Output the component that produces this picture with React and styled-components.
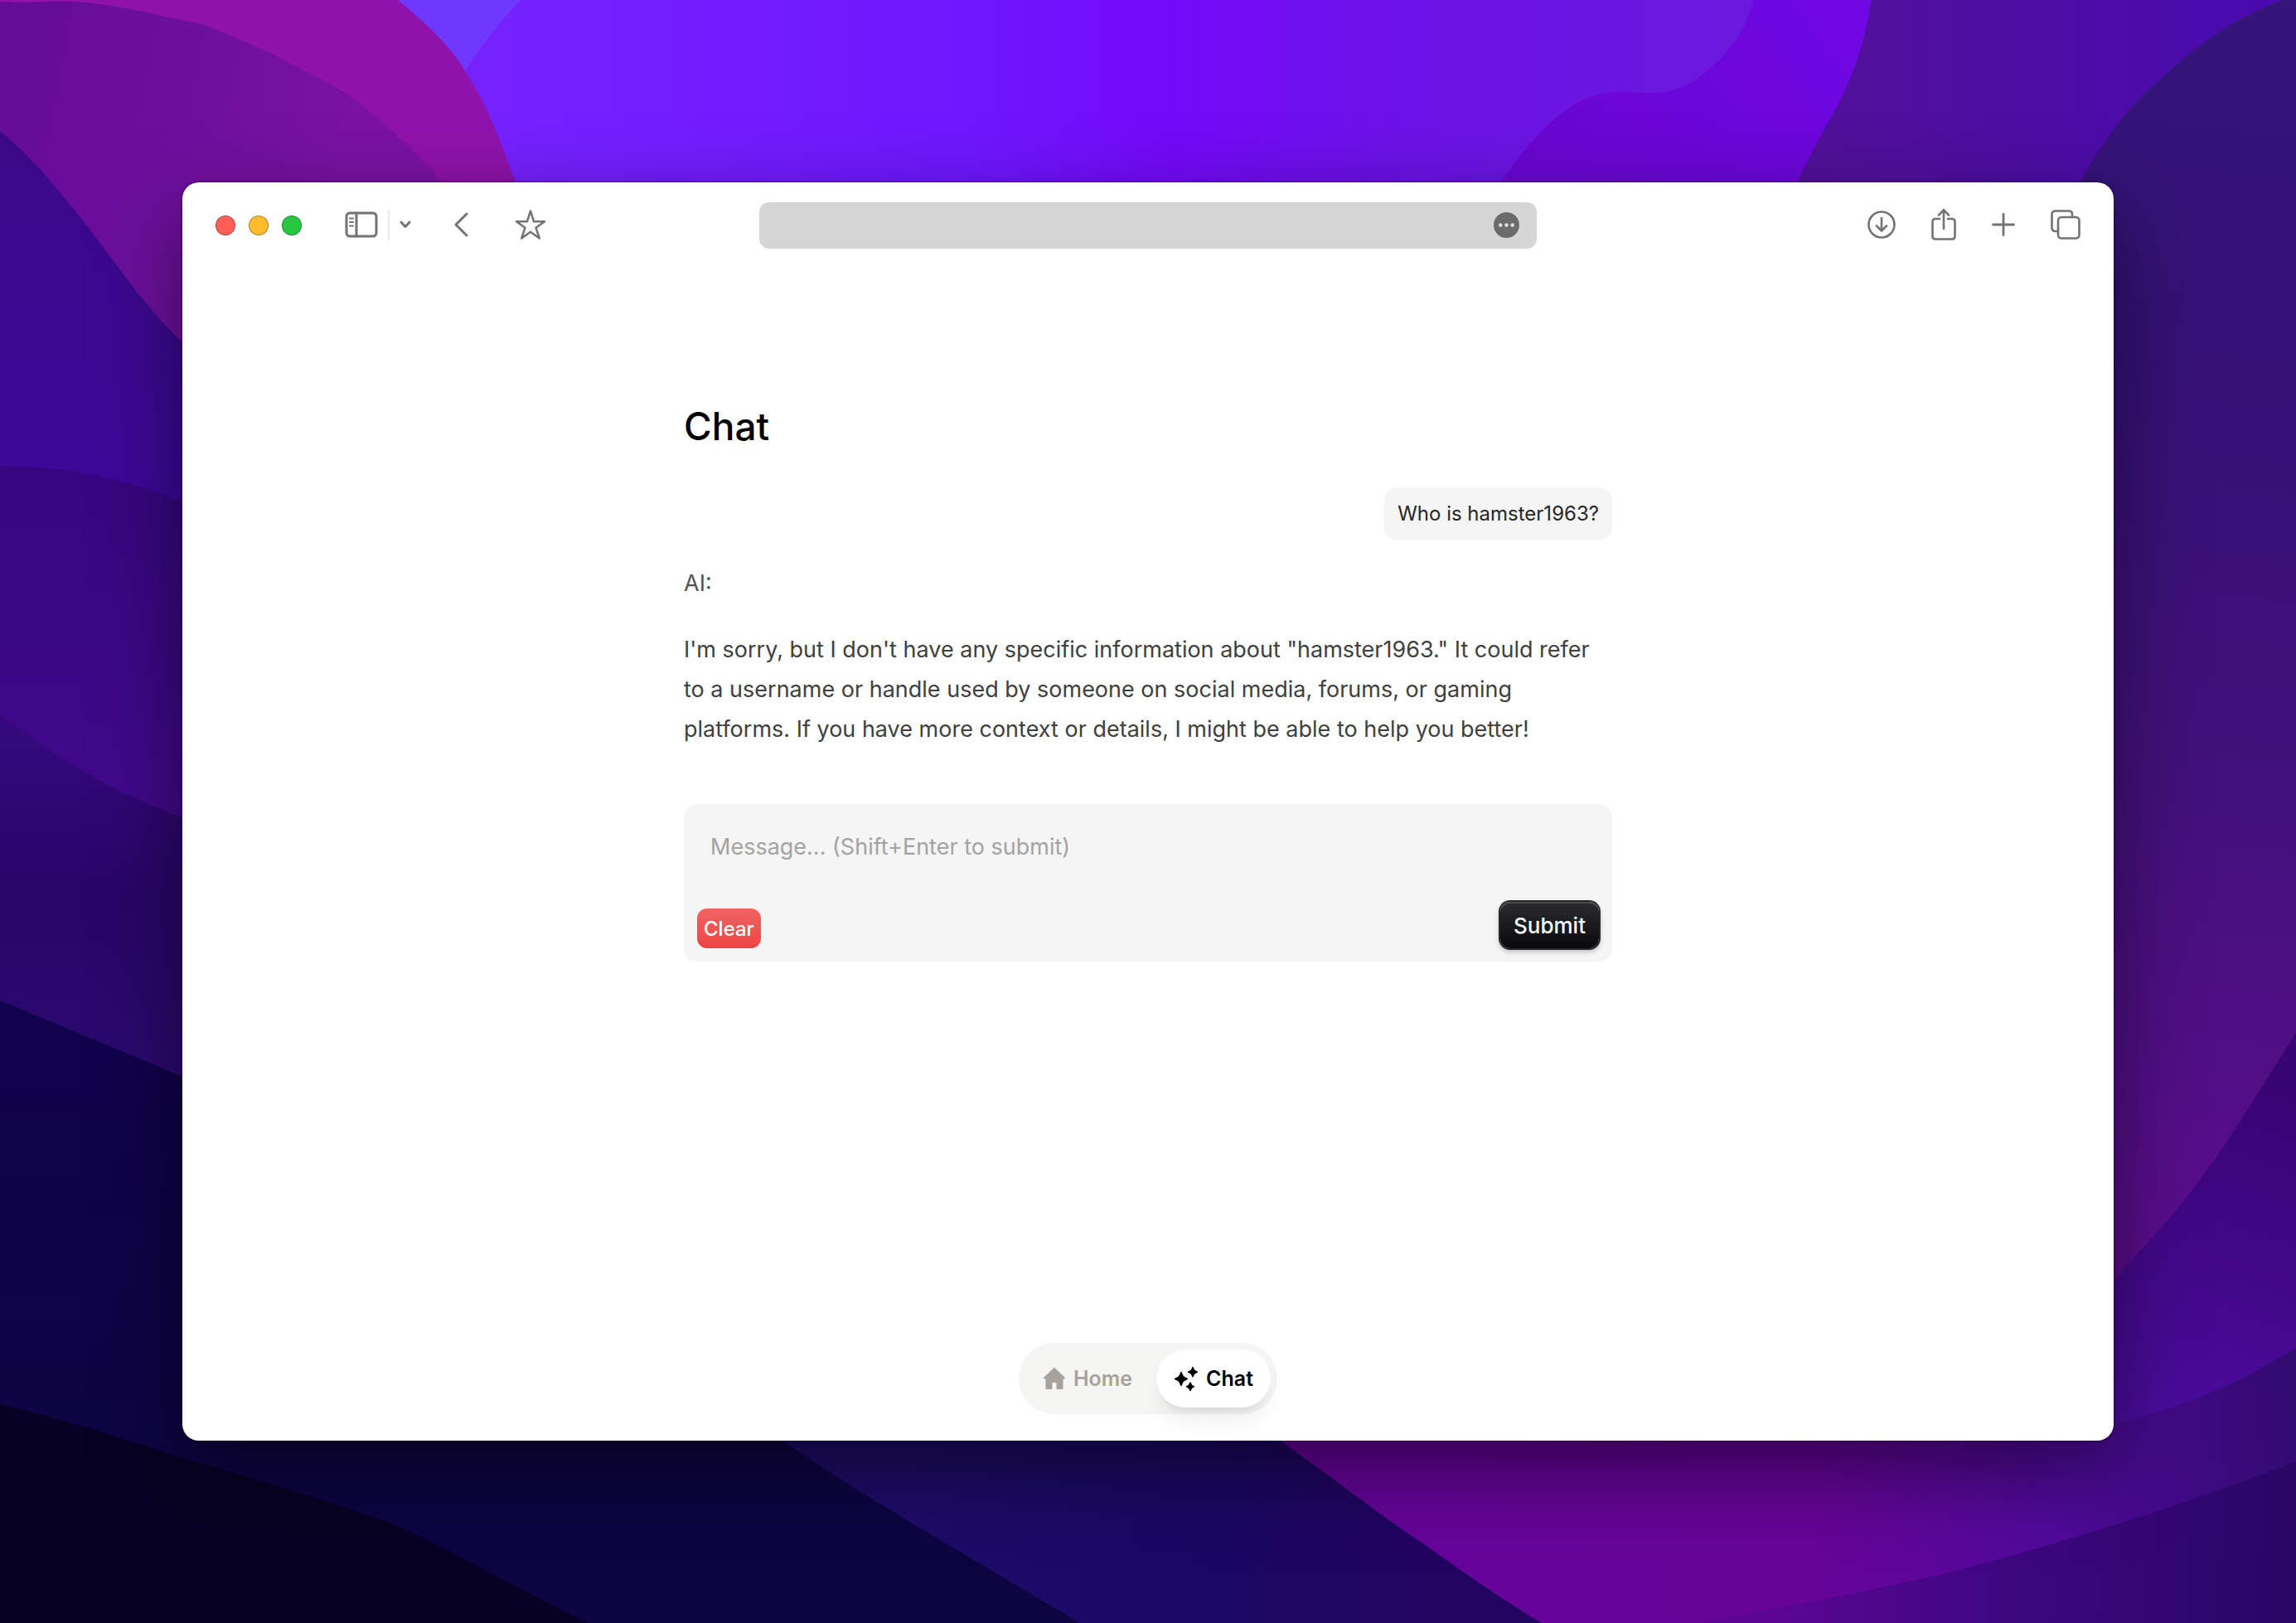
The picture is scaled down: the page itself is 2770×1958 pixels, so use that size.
import React, { useState } from "react";
import styled, { createGlobalStyle, css } from "styled-components";

const GlobalStyle = createGlobalStyle`
  *, *::before, *::after { box-sizing: border-box; }
  body {
    margin: 0;
    background: #12034c;
    font-family: Inter, "Liberation Sans", sans-serif;
    -webkit-font-smoothing: antialiased;
  }
  button, textarea { font-family: inherit; }
  h1, p { margin: 0; }
`;

const Desktop = styled.div`
  position: relative;
  isolation: isolate;
  display: flex;
  min-height: 100vh;
  padding: 220px;
  overflow: hidden;
`;

const WallpaperSvg = styled.svg`
  position: absolute;
  inset: 0;
  z-index: -1;
  width: 100%;
  height: 100%;
`;

const BrowserWindow = styled.div`
  flex: 1;
  min-width: 0;
  display: flex;
  flex-direction: column;
  background: #fff;
  border-radius: 20px;
  box-shadow: 0 0 3px rgba(0, 0, 0, 0.6), 0 36px 100px rgba(0, 0, 0, 0.5);
`;

const Toolbar = styled.header`
  display: grid;
  grid-template-columns: 1fr minmax(0, 938px) 1fr;
  align-items: center;
  height: 104px;
  padding: 0 40px;
  color: #737373;
`;

const ToolbarGroup = styled.div`
  display: flex;
  align-items: center;
  gap: ${(p) => p.$gap}px;
  justify-content: ${(p) => (p.$end ? "flex-end" : "flex-start")};
`;

const Light = styled.button`
  width: 24px;
  height: 24px;
  padding: 0;
  border: 1px solid rgba(0, 0, 0, 0.3);
  border-radius: 50%;
  background: ${(p) => p.$color};
`;

const IconButton = styled.button`
  display: flex;
  padding: 0 0 2px;
  border: 0;
  background: none;
  color: inherit;
  svg {
    display: block;
    fill: none;
    stroke: currentColor;
    stroke-width: 3;
    stroke-linecap: round;
    stroke-linejoin: round;
  }
`;

const Divider = styled.span`
  width: 2px;
  height: 36px;
  background: #ececec;
`;

const AddressBar = styled.div`
  display: flex;
  align-items: center;
  justify-content: flex-end;
  height: 56px;
  padding: 0 21px;
  border-radius: 12px;
  background: #d6d6d6;
`;

const Main = styled.main`
  flex: 1;
  display: flex;
  flex-direction: column;
  width: 100%;
  max-width: 1120px;
  margin: 0 auto;
  padding: 160px 0 32px;
`;

const Title = styled.h1`
  font-size: 46px;
  line-height: 60px;
  font-weight: 500;
  color: #000;
`;

const UserMessage = styled.p`
  align-self: flex-end;
  margin-top: 44px;
  padding: 16px;
  border-radius: 16px;
  background: #f5f5f5;
  color: #262626;
  font-size: 24px;
  line-height: 32px;
`;

const Reply = styled.div`
  display: flex;
  flex-direction: column;
  gap: 32px;
  margin-top: 28px;
  color: #404040;
  font-size: 27px;
  line-height: 48px;
`;

const Author = styled.p`
  color: #525252;
`;

const Composer = styled.form`
  display: flex;
  flex-direction: column;
  margin-top: 66px;
  border-radius: 16px;
  background: #f5f5f5;
`;

const MessageBox = styled.textarea`
  display: block;
  height: 118px;
  padding: 28px 32px 0;
  border: 0;
  outline: 0;
  resize: none;
  overflow: hidden;
  background: none;
  color: #262626;
  font-size: 27px;
  line-height: 48px;
  &::placeholder {
    color: #a3a3a3;
    opacity: 1;
  }
`;

const Actions = styled.div`
  display: flex;
  align-items: flex-end;
  justify-content: space-between;
  padding: 0 16px 16px;
`;

const ActionButton = styled.button`
  border: 0;
  color: #fff;
  font-weight: 500;
  ${(p) =>
    p.$danger
      ? css`
          height: 48px;
          padding: 0 8px;
          border-radius: 12px;
          background: linear-gradient(#f16464, #ef4444);
          font-size: 24px;
        `
      : css`
          height: 56px;
          padding: 0 16px;
          border-radius: 12px;
          background: linear-gradient(#2c2c2e, #09090b);
          box-shadow: inset 0 2px 0 rgba(255, 255, 255, 0.14), 0 0 0 2px #27272a,
            0 3px 6px 1px rgba(0, 0, 0, 0.25);
          font-size: 26px;
        `}
`;

const Dock = styled.nav`
  display: flex;
  align-self: center;
  gap: 8px;
  margin-top: auto;
  padding: 8px;
  border-radius: 43px;
  background: #f5f5f4;
`;

const DockLink = styled.a`
  display: flex;
  align-items: center;
  gap: 9px;
  height: 70px;
  padding: 0 21px;
  border-radius: 35px;
  color: #a8a29e;
  font-size: 25px;
  font-weight: 600;
  text-decoration: none;
  svg {
    display: block;
    fill: currentColor;
    stroke: currentColor;
    stroke-width: 2;
    stroke-linejoin: round;
  }
  ${(p) =>
    p.$active &&
    css`
      background: #fff;
      color: #000;
      box-shadow: 0 20px 30px -6px rgba(0, 0, 0, 0.07), 0 8px 12px -6px rgba(0, 0, 0, 0.08);
    `}
`;

const Wallpaper = () => (
  <WallpaperSvg viewBox="0 0 2770 1958" preserveAspectRatio="xMidYMid slice" aria-hidden="true">
    <defs>
      <linearGradient id="sky" gradientUnits="userSpaceOnUse" x1="560" y1="0" x2="2110" y2="0">
        <stop offset="0" stopColor="#7622ff" />
        <stop offset="0.4" stopColor="#6f17ff" />
        <stop offset="0.55" stopColor="#7309f9" />
        <stop offset="0.72" stopColor="#6c12e8" />
        <stop offset="1" stopColor="#6a19dc" />
      </linearGradient>
      <linearGradient id="violet" gradientUnits="userSpaceOnUse" x1="1900" y1="220" x2="2200" y2="0">
        <stop offset="0" stopColor="#6a06d2" />
        <stop offset="1" stopColor="#6e07e2" />
      </linearGradient>
      <linearGradient id="plum" gradientUnits="userSpaceOnUse" x1="2200" y1="0" x2="2740" y2="0">
        <stop offset="0" stopColor="#511099" />
        <stop offset="1" stopColor="#480ab0" />
      </linearGradient>
      <linearGradient id="orchid" gradientUnits="userSpaceOnUse" x1="0" y1="60" x2="430" y2="130">
        <stop offset="0" stopColor="#650b99" />
        <stop offset="0.4" stopColor="#6a0f9c" />
        <stop offset="1" stopColor="#7a12a4" />
      </linearGradient>
      <linearGradient id="east" gradientUnits="userSpaceOnUse" x1="2700" y1="0" x2="2560" y2="1500">
        <stop offset="0" stopColor="#34157a" />
        <stop offset="0.3" stopColor="#351176" />
        <stop offset="0.6" stopColor="#41117a" />
        <stop offset="1" stopColor="#5a0d8c" />
      </linearGradient>
      <linearGradient id="southeast" gradientUnits="userSpaceOnUse" x1="2740" y1="1300" x2="2600" y2="1700">
        <stop offset="0" stopColor="#380372" />
        <stop offset="1" stopColor="#4a0c9c" />
      </linearGradient>
      <linearGradient id="berry" gradientUnits="userSpaceOnUse" x1="1700" y1="1800" x2="2770" y2="1700">
        <stop offset="0" stopColor="#66049a" />
        <stop offset="0.45" stopColor="#660498" />
        <stop offset="0.72" stopColor="#4f0a9a" />
        <stop offset="1" stopColor="#320a70" />
      </linearGradient>
      <linearGradient id="corner" gradientUnits="userSpaceOnUse" x1="2150" y1="1920" x2="2770" y2="1958">
        <stop offset="0" stopColor="#5a0594" />
        <stop offset="0.4" stopColor="#3f0781" />
        <stop offset="1" stopColor="#280665" />
      </linearGradient>
      <linearGradient id="navy" gradientUnits="userSpaceOnUse" x1="1100" y1="1850" x2="1750" y2="1850">
        <stop offset="0" stopColor="#1d0c68" />
        <stop offset="0.5" stopColor="#190864" />
        <stop offset="1" stopColor="#220360" />
      </linearGradient>
      <linearGradient id="deep" gradientUnits="userSpaceOnUse" x1="0" y1="1230" x2="0" y2="1900">
        <stop offset="0" stopColor="#10024c" />
        <stop offset="1" stopColor="#0c0540" />
      </linearGradient>
      <linearGradient id="west1" gradientUnits="userSpaceOnUse" x1="0" y1="200" x2="0" y2="600">
        <stop offset="0" stopColor="#3b088a" />
        <stop offset="1" stopColor="#3c0899" />
      </linearGradient>
      <linearGradient id="west2" gradientUnits="userSpaceOnUse" x1="0" y1="560" x2="0" y2="980">
        <stop offset="0" stopColor="#35067e" />
        <stop offset="1" stopColor="#41098c" />
      </linearGradient>
      <linearGradient id="west3" gradientUnits="userSpaceOnUse" x1="0" y1="870" x2="0" y2="1300">
        <stop offset="0" stopColor="#35097d" />
        <stop offset="0.5" stopColor="#280568" />
        <stop offset="1" stopColor="#2b0a70" />
      </linearGradient>
    </defs>
    <rect width="2770" height="1958" fill="url(#sky)" />
    <path d="M460 0H628Q590 40 558 90L500 90Z" fill="#7038ff" />
    <path d="M2115 0C2108 35 2085 65 2058 87C2030 112 2000 113 1979 112C1943 108 1915 113 1890 132C1850 162 1828 195 1811 220V300H2300V0Z" fill="url(#violet)" />
    <path d="M2258 0C2252 36 2245 62 2235 87C2226 110 2218 126 2208 143C2194 168 2180 194 2169 220V400H2770V0Z" fill="url(#plum)" />
    <path d="M2753 0C2690 25 2650 55 2607 95C2560 135 2535 175 2509 220V1700H2770V0Z" fill="url(#east)" />
    <path d="M2770 1246C2735 1300 2700 1360 2663 1411C2630 1458 2590 1500 2540 1556L2400 1700V1800H2770Z" fill="url(#southeast)" />
    <path d="M0 0H480C520 33 545 58 562 87C590 130 605 175 622 220V600H0Z" fill="#8f13ab" />
    <path d="M0 2C40 4 70 0 106 3C150 8 200 20 247 30C275 42 322 60 353 78C385 94 405 104 424 117C460 145 500 180 534 220V600H0Z" fill="url(#orchid)" />
    <path d="M0 158C40 190 75 235 107 275C140 318 175 370 220 413L300 480V800H0Z" fill="url(#west1)" />
    <path d="M0 562C80 562 150 578 220 606L300 640V1100H0Z" fill="url(#west2)" />
    <path d="M0 862C60 905 110 945 220 986L300 1015V1400H0Z" fill="url(#west3)" />
    <path d="M1500 1700L2550 1717C2630 1700 2700 1670 2770 1626V1958H1500Z" fill="url(#berry)" />
    <path d="M2050 1958C2200 1930 2290 1912 2367 1893C2500 1858 2650 1810 2770 1763V1958Z" fill="url(#corner)" />
    <path d="M900 1700H1490C1600 1775 1660 1825 1714 1860C1770 1900 1820 1935 1860 1958H900Z" fill="url(#navy)" />
    <path d="M0 1207C60 1232 140 1265 220 1299L890 1700C960 1750 1010 1783 1060 1813C1120 1850 1220 1908 1302 1958H0Z" fill="url(#deep)" />
    <path d="M0 1694C80 1714 150 1735 212 1757C310 1785 400 1812 477 1840C560 1878 630 1920 710 1958H0Z" fill="#070223" />
  </WallpaperSvg>
);

const SidebarIcon = () => (
  <svg width="40" height="32" viewBox="0 0 40 32">
    <rect x="2" y="2" width="36" height="28" rx="4" />
    <path d="M14 2V30" />
    <path d="M6 8.500H10M6 13H10M6 17.500H10" strokeWidth="2" />
  </svg>
);

const ChevronIcon = () => (
  <svg width="14" height="10" viewBox="0 0 14 10">
    <path d="M2 2L7 7.500L12 2" />
  </svg>
);

const BackIcon = () => (
  <svg width="17" height="30" viewBox="0 0 17 30">
    <path d="M15 2L2 15L15 28" />
  </svg>
);

const StarIcon = () => (
  <svg width="38" height="38" viewBox="0 0 38 38">
    <path
      d="M19 2.500L23 15.200H36L25.500 22.700L29.800 35.500L19 27.700L8.200 35.500L12.500 22.700L2 15.200H15Z"
      strokeWidth="2.500"
    />
  </svg>
);

const MoreIcon = () => (
  <svg width="31" height="31" viewBox="0 0 31 31">
    <circle cx="15.500" cy="15.500" r="15.500" fill="#6b6b6b" stroke="none" />
    <g fill="#e2e2e2" stroke="none">
      <circle cx="8.300" cy="15.500" r="2.200" />
      <circle cx="15.500" cy="15.500" r="2.200" />
      <circle cx="22.700" cy="15.500" r="2.200" />
    </g>
  </svg>
);

const DownloadIcon = () => (
  <svg width="34" height="34" viewBox="0 0 34 34">
    <circle cx="17" cy="17" r="15.500" strokeWidth="2.600" />
    <path d="M17 9V24M11 18.500L17 24.500L23 18.500" strokeWidth="2.600" />
  </svg>
);

const ShareIcon = () => (
  <svg width="30" height="40" viewBox="0 0 30 40">
    <path d="M10 13H5Q1.500 13 1.500 16.500V34Q1.500 37.500 5 37.500H25Q28.500 37.500 28.500 34V16.500Q28.500 13 25 13H20" strokeWidth="2.600" />
    <path d="M15 25V2.500M9 8.500L15 2.200L21 8.500" strokeWidth="2.600" />
  </svg>
);

const PlusIcon = () => (
  <svg width="28" height="28" viewBox="0 0 28 28">
    <path d="M14 1.500V26.500M1.500 14H26.500" strokeWidth="2.800" />
  </svg>
);

const TabsIcon = () => (
  <svg width="36" height="36" viewBox="0 0 36 36">
    <path d="M9 26H6Q1.500 26 1.500 22V5.500Q1.500 1.500 6 1.500H22Q26 1.500 26 5.500V9" strokeWidth="2.600" />
    <rect x="9" y="9" width="25.500" height="25.500" rx="4" strokeWidth="2.600" />
  </svg>
);

const HomeIcon = () => (
  <svg width="28" height="28" viewBox="0 0 28 28">
    <path d="M14 2L26 13.500H23.500V26H17.500V18H10.500V26H4.500V13.500H2Z" />
  </svg>
);

const SparklesIcon = () => (
  <svg width="30" height="30" viewBox="0 0 30 30">
    <path d="M9 8Q10.300 14 16 15.500Q10.300 17 9 23Q7.700 17 2 15.500Q7.700 14 9 8Z" />
    <path d="M23 2Q23.800 6.200 28 7.200Q23.800 8.200 23 12.400Q22.200 8.200 18 7.200Q22.200 6.200 23 2Z" />
    <path d="M20 20.500Q20.600 24 24 24.800Q20.600 25.600 20 29Q19.400 25.600 16 24.800Q19.400 24 20 20.500Z" />
  </svg>
);

export default function App() {
  const [message, setMessage] = useState("");

  return (
    <>
      <GlobalStyle />
      <Desktop>
        <Wallpaper />
        <BrowserWindow>
          <Toolbar>
            <ToolbarGroup $gap={52}>
              <ToolbarGroup $gap={16}>
                <Light $color="#ff5f57" aria-label="Close" />
                <Light $color="#febc2e" aria-label="Minimize" />
                <Light $color="#28c840" aria-label="Zoom" />
              </ToolbarGroup>
              <ToolbarGroup $gap={12}>
                <IconButton aria-label="Sidebar"><SidebarIcon /></IconButton>
                <Divider />
                <IconButton aria-label="Tab groups"><ChevronIcon /></IconButton>
              </ToolbarGroup>
              <ToolbarGroup $gap={56}>
                <IconButton aria-label="Back"><BackIcon /></IconButton>
                <IconButton aria-label="Bookmark"><StarIcon /></IconButton>
              </ToolbarGroup>
            </ToolbarGroup>
            <AddressBar>
              <IconButton aria-label="Page menu"><MoreIcon /></IconButton>
            </AddressBar>
            <ToolbarGroup $gap={43} $end>
              <IconButton aria-label="Downloads"><DownloadIcon /></IconButton>
              <IconButton aria-label="Share"><ShareIcon /></IconButton>
              <IconButton aria-label="New tab"><PlusIcon /></IconButton>
              <IconButton aria-label="Tab overview"><TabsIcon /></IconButton>
            </ToolbarGroup>
          </Toolbar>
          <Main>
            <Title>Chat</Title>
            <UserMessage>Who is hamster1963?</UserMessage>
            <Reply>
              <Author>AI:</Author>
              <p>
                I'm sorry, but I don't have any specific information about "hamster1963." It could refer
                to a username or handle used by someone on social media, forums, or gaming
                platforms. If you have more context or details, I might be able to help you better!
              </p>
            </Reply>
            <Composer onSubmit={(e) => e.preventDefault()}>
              <MessageBox
                aria-label="Message"
                placeholder="Message... (Shift+Enter to submit)"
                value={message}
                onChange={(e) => setMessage(e.target.value)}
              />
              <Actions>
                <ActionButton type="button" $danger onClick={() => setMessage("")}>Clear</ActionButton>
                <ActionButton type="submit">Submit</ActionButton>
              </Actions>
            </Composer>
            <Dock>
              <DockLink href="#home"><HomeIcon />Home</DockLink>
              <DockLink href="#chat" $active><SparklesIcon />Chat</DockLink>
            </Dock>
          </Main>
        </BrowserWindow>
      </Desktop>
    </>
  );
}
